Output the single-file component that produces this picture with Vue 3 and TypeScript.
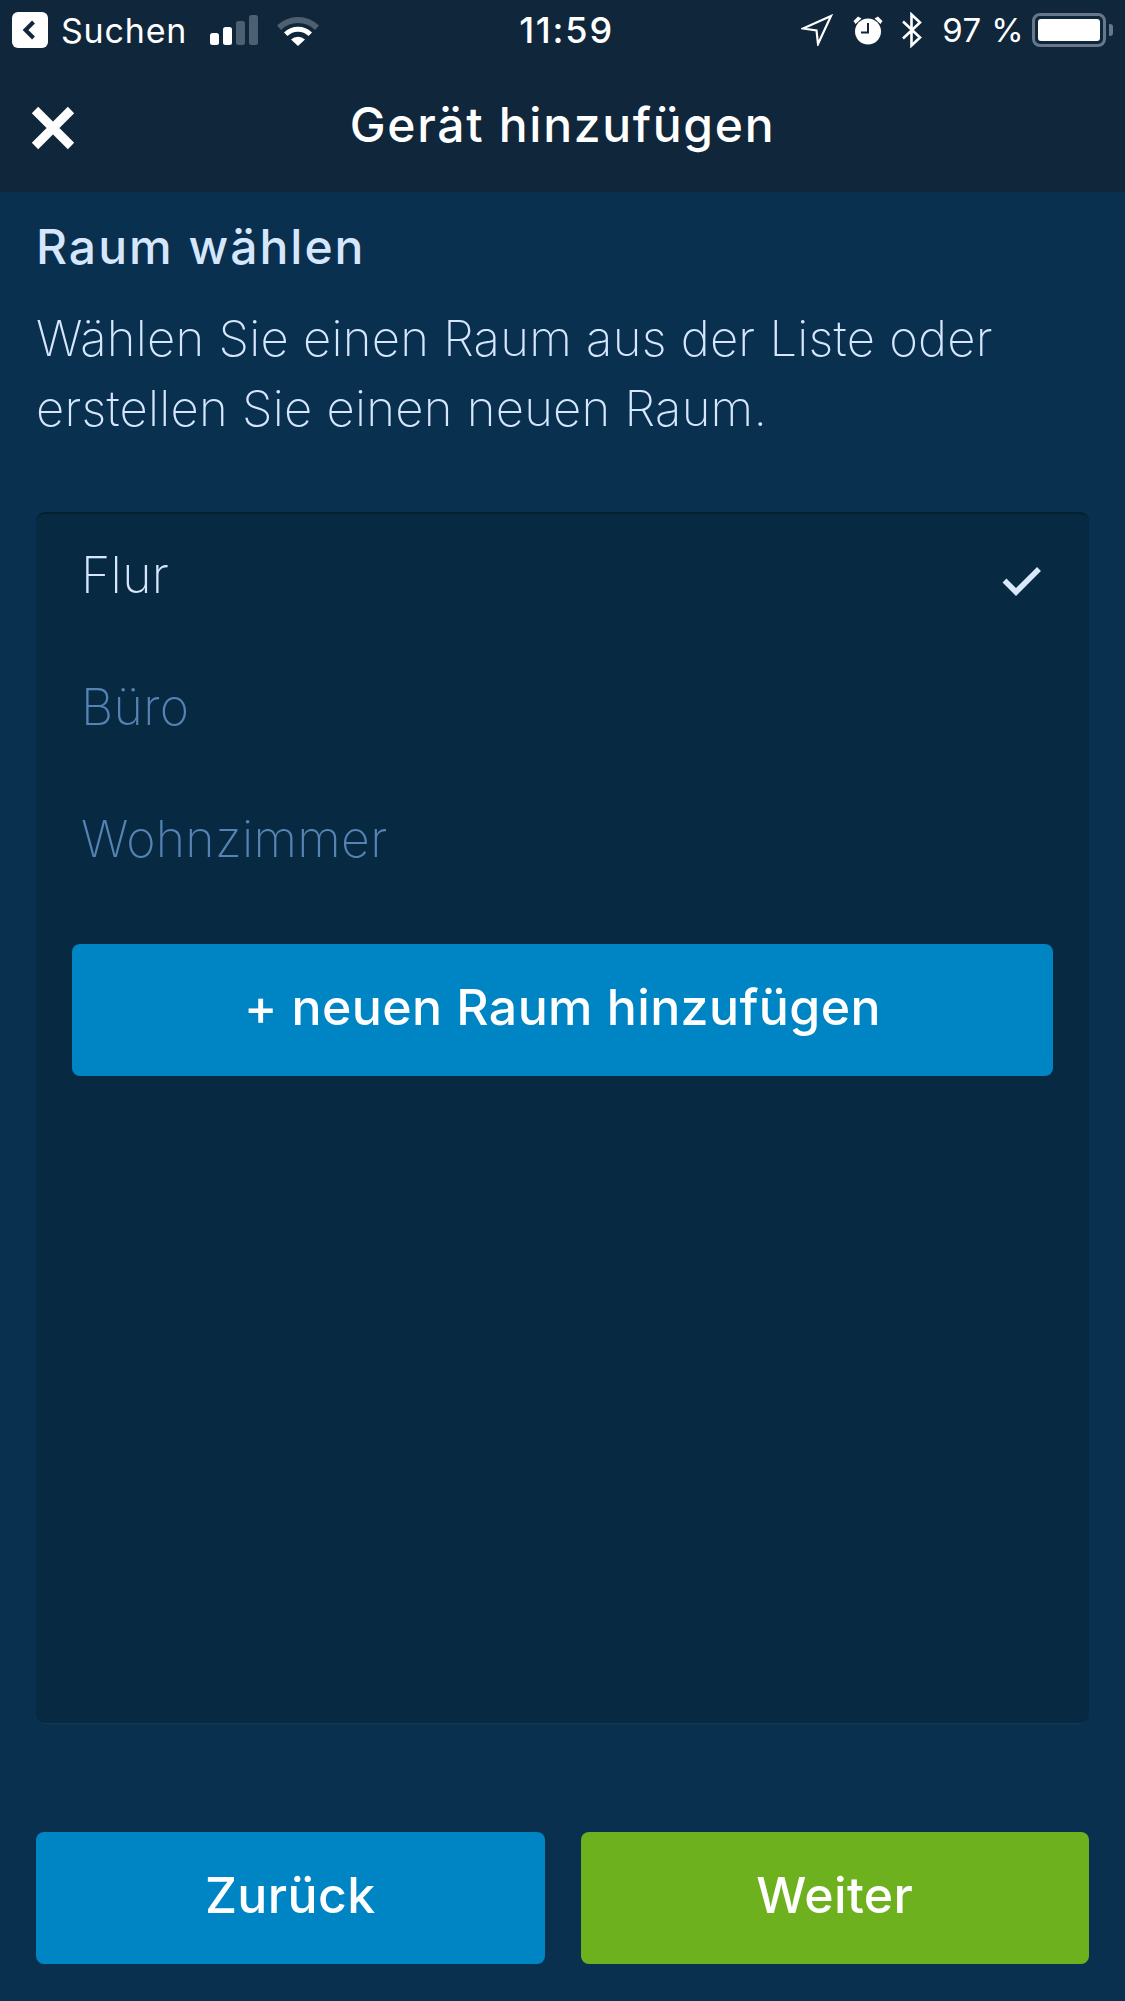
<script setup lang="ts">
const rooms = [
  { name: 'Flur', selected: true },
  { name: 'Büro', selected: false },
  { name: 'Wohnzimmer', selected: false },
]
</script>

<template>
  <div class="page">
    <header class="top">
      <div class="status">
        <div class="status-left">
          <svg class="back" width="36" height="36" viewBox="0 0 36 36">
            <rect width="36" height="36" rx="6" fill="#fff" />
            <path d="M21.5 10 L13.5 18 L21.5 26" fill="none" stroke="#10263b" stroke-width="4" />
          </svg>
          <span class="st-text suchen">Suchen</span>
          <svg class="signal" width="48" height="30" viewBox="0 0 48 30">
            <rect x="0" y="18" width="9" height="12" rx="2.5" fill="#fff" />
            <rect x="13" y="12" width="9" height="18" rx="2.5" fill="#fff" />
            <rect x="26" y="6" width="9" height="24" rx="2.5" fill="#4d6072" />
            <rect x="39" y="0" width="9" height="30" rx="2.5" fill="#4d6072" />
          </svg>
          <svg class="wifi" width="44" height="31" viewBox="0 0 44 31">
            <path d="M1 10.5 A30 30 0 0 1 43 10.5 L39 15 A24 24 0 0 0 5 15 Z" fill="#4d6072" />
            <path d="M8 17.5 A20 20 0 0 1 36 17.5 L32.5 21 A15 15 0 0 0 11.500 21 Z" fill="#fff" />
            <path d="M15 24.500 A10 10 0 0 1 29 24.500 L22 31 Z" fill="#fff" />
          </svg>
        </div>
        <span class="st-text clock">11:59</span>
        <div class="status-right">
          <svg width="32" height="32" viewBox="0 0 32 32">
            <path d="M30 2 L2 14.500 L15.500 16.500 L17 30 Z" fill="none" stroke="#fff" stroke-width="2.200" stroke-linejoin="miter" />
          </svg>
          <svg class="alarm" width="30" height="30" viewBox="0 0 30 30">
            <circle cx="15" cy="16.500" r="13" fill="#fff" />
            <path d="M0.500 6 L5 1.500 L8.500 3.500 L2.500 9 Z M29.500 6 L25 1.500 L21.500 3.500 L27.500 9 Z" fill="#fff" />
            <path d="M15 8 V17.500 H8" fill="none" stroke="#10263b" stroke-width="2" />
          </svg>
          <svg class="bt" width="22" height="36" viewBox="0 0 22 36">
            <path d="M2 9.500 L19 25.500 L10.500 33.500 V2.500 L19 10.500 L2 26.500" fill="none" stroke="#fff" stroke-width="2.600" />
          </svg>
          <span class="st-text pct">97 %</span>
          <div class="battery">
            <div class="battery-shell"><div class="battery-fill"></div></div>
            <div class="battery-tip"></div>
          </div>
        </div>
      </div>
      <div class="nav">
        <svg class="close" width="46" height="46" viewBox="0 0 46 46">
          <path d="M5 5 L41 41 M41 5 L5 41" stroke="#fff" stroke-width="9" fill="none" />
        </svg>
        <h1 class="title">Gerät hinzufügen</h1>
      </div>
    </header>

    <main class="main">
      <h2 class="heading">Raum wählen</h2>
      <p class="intro">Wählen Sie einen Raum aus der Liste oder erstellen Sie einen neuen Raum.</p>

      <section class="panel">
        <ul class="rooms">
          <li v-for="room in rooms" :key="room.name" class="room" :class="{ selected: room.selected }">
            <span>{{ room.name }}</span>
            <svg v-if="room.selected" class="check" width="40" height="32" viewBox="0 0 40 32">
              <path d="M2.500 15.500 L14 27 L37 4" fill="none" stroke="#d9e9fb" stroke-width="5.500" />
            </svg>
          </li>
        </ul>
        <button class="btn add" type="button">+ neuen Raum hinzufügen</button>
      </section>

      <div class="actions">
        <button class="btn big" type="button">Zurück</button>
        <button class="btn big next" type="button">Weiter</button>
      </div>
    </main>
  </div>
</template>

<style>
html, body { margin: 0; background: #09304e; }
</style>

<style scoped>
.page {
  width: 1125px;
  height: 2001px;
  display: flex;
  flex-direction: column;
  font-family: Inter, "Noto Sans", sans-serif;
  overflow: hidden;
  background: #09304e;
}
.top { height: 192px; background: #10263b; color: #fff; flex: none; }
.status {
  height: 60px;
  padding: 0 12px;
  display: grid;
  grid-template-columns: 1fr auto 1fr;
  align-items: center;
}
.status-left, .status-right { display: flex; align-items: center; }
.status-right { justify-content: flex-end; }
.st-text { font-size: 33px; color: #fff; }
.suchen { margin-left: 13px; font-size: 34px; letter-spacing: 0.8px; }
.signal { margin-left: 23px; }
.wifi { margin-left: 18px; }
.clock { font-weight: 500; font-size: 36px; letter-spacing: 1.8px; position: relative; left: 4px; }
.alarm { margin-left: 20px; }
.bt { margin-left: 18px; }
.pct { margin-left: 19px; letter-spacing: 0.4px; }
.battery { display: flex; align-items: center; margin-left: 8px; }
.battery-shell {
  width: 74px; height: 34px; box-sizing: border-box;
  border: 3px solid #66788a; border-radius: 8px; padding: 3px;
}
.battery-fill { width: 100%; height: 100%; background: #fff; border-radius: 3px; }
.battery-tip { width: 4px; height: 12px; background: #66788a; border-radius: 0 3px 3px 0; margin-left: 3px; }
.nav {
  height: 132px;
  position: relative;
  display: flex;
  align-items: center;
  justify-content: center;
  padding-bottom: 4px;
  box-sizing: border-box;
}
.close { position: absolute; left: 30px; top: 45px; }
.title { margin: 0; font-size: 48px; font-weight: 450; letter-spacing: 1.7px; }
.main {
  flex: 1;
  display: flex;
  flex-direction: column;
  padding: 0 36px;
  min-height: 0;
}
.heading { margin: 28px 0 0; font-size: 48px; line-height: 54px; font-weight: 500; color: #d5e6fd; letter-spacing: 2px; }
.intro { margin: 30px 0 0; font-size: 49px; line-height: 70px; font-weight: 200; color: #d5e6fd; letter-spacing: 0.25px; }
.panel {
  margin-top: 68px;
  height: 1212px;
  box-sizing: border-box;
  background: #072a42;
  border-radius: 9px;
  border-top: 2px solid #04202f;
  border-bottom: 1px solid #0c3a5a;
  padding: 0 36px;
  flex: none;
}
.rooms { list-style: none; margin: 0; padding: 0; }
.room {
  height: 132px;
  display: flex;
  align-items: center;
  justify-content: space-between;
  padding: 0 11px 0 9px;
  font-size: 50px;
  font-weight: 200;
  letter-spacing: 0.3px;
  color: #5583b3;
}
.room span { position: relative; top: -5px; }
.room.selected { color: #d5e6fd; }
.check { margin-right: 0; margin-top: 2px; }
.btn {
  display: block;
  border: 0;
  border-radius: 8px;
  background: #0085c4;
  color: #fff;
  font-family: inherit;
  font-size: 50px;
  font-weight: 450;
  letter-spacing: 0.4px;
  padding: 0 0 6px;
}
.add { width: 100%; height: 132px; margin-top: 34px; }
.actions { margin-top: 108px; display: grid; grid-template-columns: 1fr 1fr; gap: 36px; }
.big { height: 132px; }
.next { background: #6eb11e; }
</style>
